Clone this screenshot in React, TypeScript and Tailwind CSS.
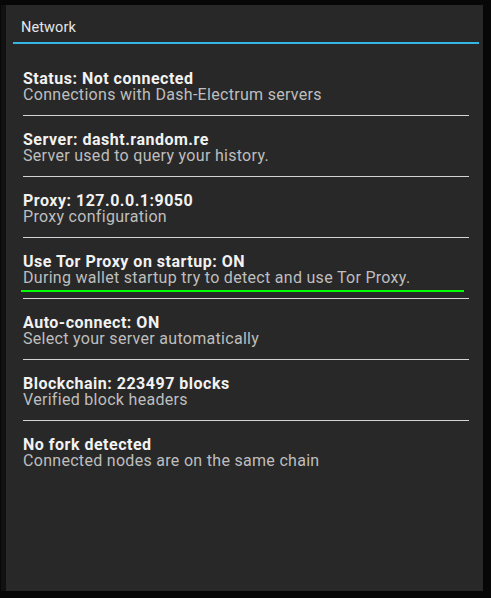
const rows = [
  { title: "Status: Not connected", sub: "Connections with Dash-Electrum servers" },
  { title: "Server: dasht.random.re", sub: "Server used to query your history." },
  { title: "Proxy: 127.0.0.1:9050", sub: "Proxy configuration" },
  {
    title: "Use Tor Proxy on startup: ON",
    sub: "During wallet startup try to detect and use Tor Proxy.",
    marked: true,
  },
  { title: "Auto-connect: ON", sub: "Select your server automatically" },
  { title: "Blockchain: 223497 blocks", sub: "Verified block headers" },
  { title: "No fork detected", sub: "Connected nodes are on the same chain" },
];

export default function App() {
  return (
    <div
      className="w-[491px] h-[598px] bg-[#070707] pt-[5px] pl-[1px]"
      style={{ fontFamily: "Roboto, 'Noto Sans', sans-serif" }}
    >
      <div className="flex h-[586px] w-[482px] bg-[#111111] pl-[5px]">
        <div className="flex h-full w-[477px] flex-col bg-[#282828]">
          <div className="h-[37px] pl-[15px] pt-[15px] text-[14.5px] leading-[16px] tracking-[0.1px] text-[#e6e6e6]">
            Network
          </div>
          <div className="ml-[7px] mr-[4px] h-[2px] bg-[#33b5e5]" />
          <div className="ml-[17px] mr-[14px] mt-[27px] flex flex-col">
            {rows.map((row, i) => (
              <div key={i}>
                {i > 0 && <div className="h-[1px] bg-[#d4d4d4]" />}
                <div className={i > 0 ? "pt-[16px]" : ""}>
                  <div className="text-[16px] font-bold leading-[16px] tracking-[0.5px] text-[#f2f2f2]">
                    {row.title}
                  </div>
                  <div className="text-[16px] leading-[16px] tracking-[0.3px] text-[#bebebe]">
                    {row.sub}
                  </div>
                  {row.marked ? (
                    <div className="pb-[6px] pt-[4px]">
                      <div className="ml-[-2px] mr-[5px] h-[2px] bg-[#00ff00]" />
                    </div>
                  ) : (
                    <div className="h-[12px]" />
                  )}
                </div>
              </div>
            ))}
          </div>
        </div>
      </div>
    </div>
  );
}
